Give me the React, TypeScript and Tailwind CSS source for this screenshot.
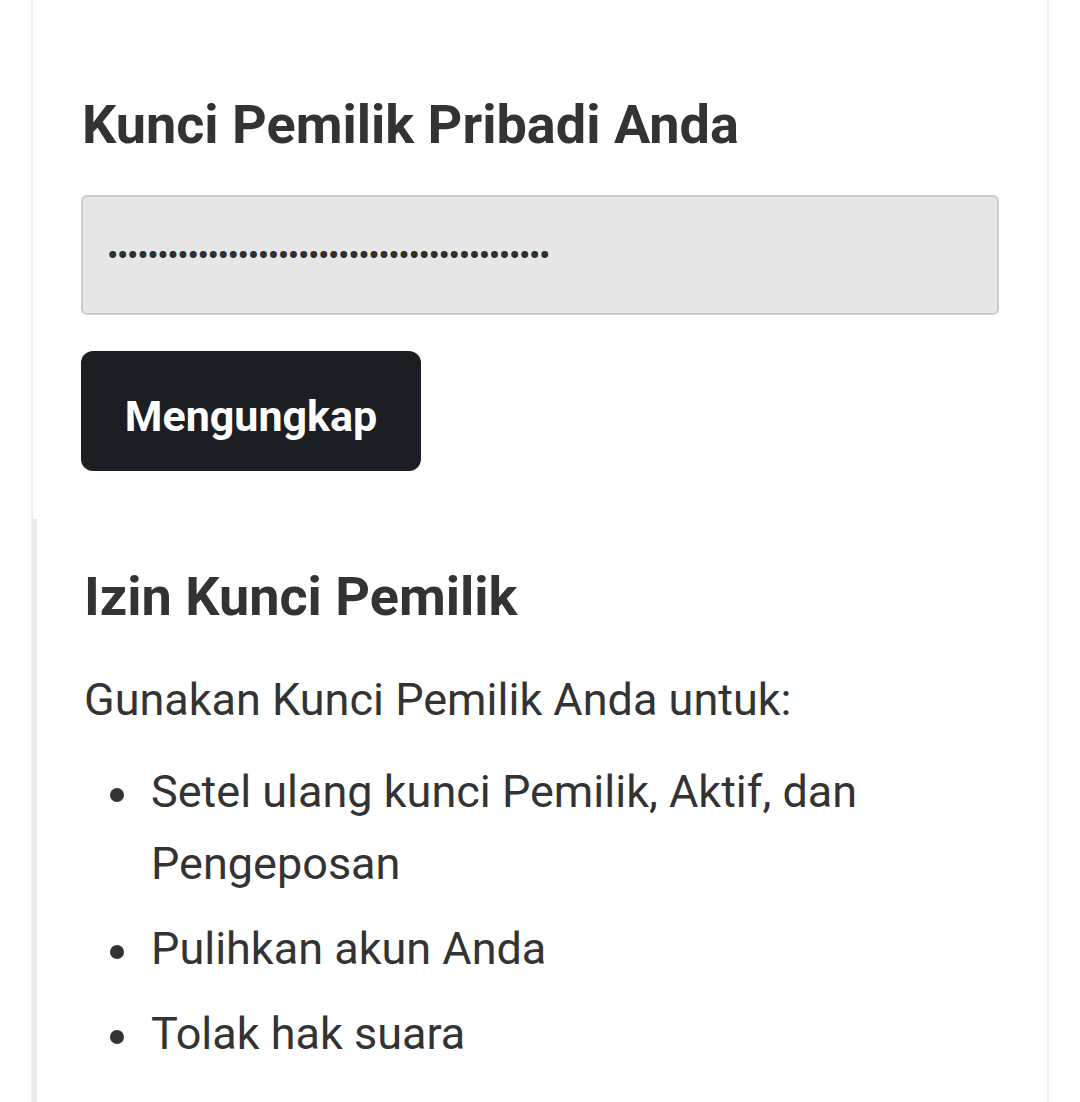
import React from "react";

export default function App() {
  const dots = Array.from({ length: 44 });
  const items = ["Setel ulang kunci Pemilik, Aktif, dan Pengeposan", "Pulihkan akun Anda", "Tolak hak suara"];
  return (
    <div className="min-h-[1102px] bg-white" style={{ fontFamily: "Roboto, 'Liberation Sans', sans-serif" }}>
      <div className="ml-[31px] w-[1018px] min-h-[1102px] border-x-2 border-[#ececec] text-[#333333] flex flex-col">
        <div className="pl-[48px] pr-[48px] pt-[95px] pb-[48px]">
          <h1 className="ml-px text-[54px] font-bold leading-[60px]">Kunci Pemilik Pribadi Anda</h1>
          <div className="mt-[40px] h-[120px] rounded-[6px] border-2 border-[#cccccc] bg-[#e6e6e6] flex items-center pl-[24px]">
            <span className="text-[34px] leading-none text-[#2f2f2f] flex">
              {dots.map((_, i) => (
                <span key={i} className="inline-block w-[10.05px] text-center">•</span>
              ))}
            </span>
          </div>
          <button className="mt-[36px] h-[120px] w-[340px] rounded-[12px] bg-[#1b1f24] text-white text-[43px] font-bold pt-[10px]">
            Mengungkap
          </button>
        </div>
        <div className="flex-1 -ml-px border-l-[5px] border-[#ececec] pl-[47px] pr-[48px] pt-[48px]">
          <h2 className="text-[54px] font-bold leading-[60px]">Izin Kunci Pemilik</h2>
          <p className="mt-[37px] text-[45px] leading-[72px]">Gunakan Kunci Pemilik Anda untuk:</p>
          <ul className="mt-[20px] text-[45px] leading-[72px]">
            {items.map((t) => (
              <li key={t} className="mb-[13px] flex items-start">
                <span className="w-[67px] shrink-0">
                  <span className="block ml-[26px] mt-[32px] w-[14px] h-[14px] rounded-full bg-[#333333]" />
                </span>
                <span>{t}</span>
              </li>
            ))}
          </ul>
        </div>
      </div>
    </div>
  );
}
